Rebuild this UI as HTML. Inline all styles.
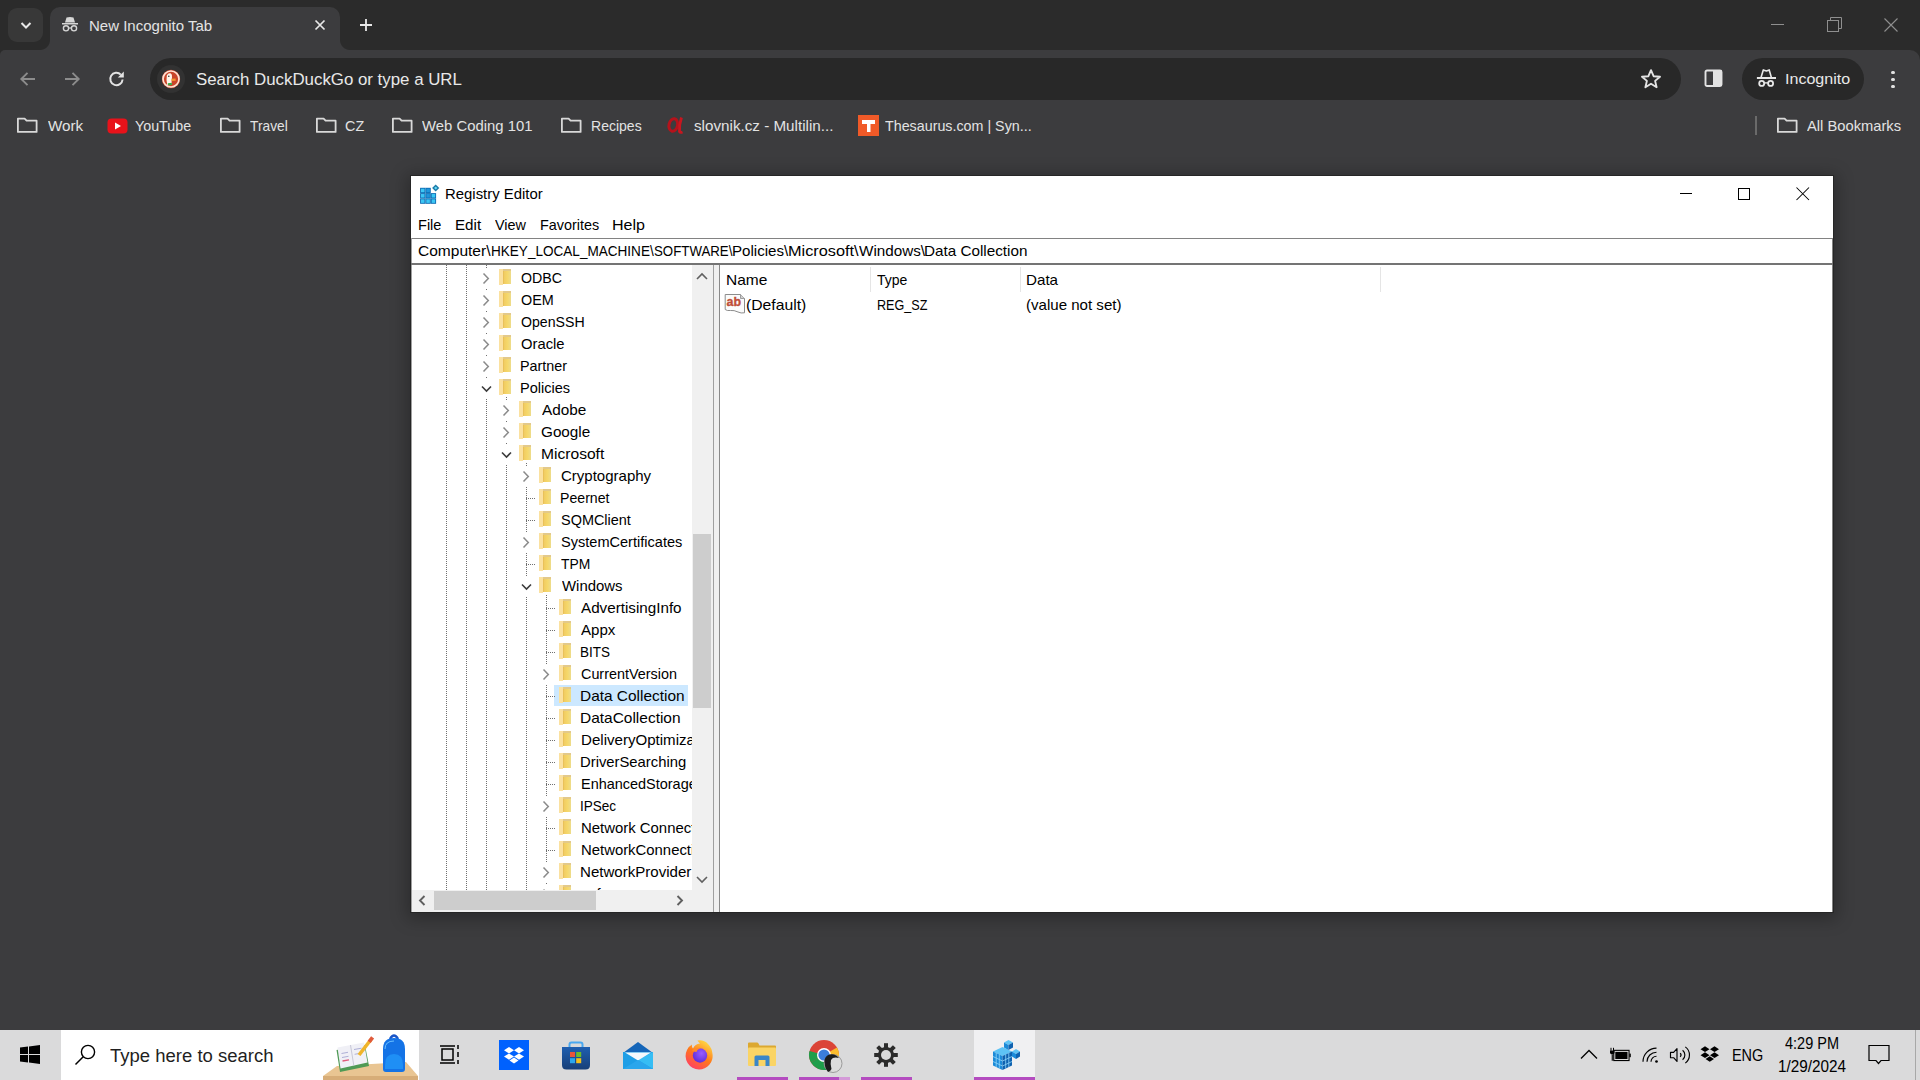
<!DOCTYPE html>
<html><head><meta charset="utf-8"><title>Registry Editor</title>
<style>
html,body{margin:0;padding:0;}
body{width:1920px;height:1080px;overflow:hidden;position:relative;background:#3c3c3e;font-family:"Liberation Sans", sans-serif;}
</style></head><body>
<div style="position:absolute;left:0px;top:0px;width:1920px;height:62px;background:#2b2b2b"></div>
<div style="position:absolute;left:0px;top:50px;width:1920px;height:12px;background:#3c3c3e;border-radius:5px 10px 0 0"></div>
<div style="position:absolute;left:8px;top:8px;width:35px;height:34px;background:#383838;border-radius:9px"></div>
<svg style="position:absolute;left:18px;top:18px;" width="16" height="14" viewBox="0 0 16 14"><path d="M3.5 5 L8 9.5 L12.5 5" fill="none" stroke="#e8e8e8" stroke-width="2"/></svg>
<div style="position:absolute;left:50px;top:7px;width:290px;height:43px;background:#3c3c3e;border-radius:10px 10px 0 0"></div>
<div style="position:absolute;left:40px;top:40px;width:10px;height:10px;background:radial-gradient(circle at 0 0, #2b2b2b 9.5px, #3c3c3e 10.5px)"></div>
<div style="position:absolute;left:340px;top:40px;width:10px;height:10px;background:radial-gradient(circle at 100% 0, #2b2b2b 9.5px, #3c3c3e 10.5px)"></div>
<svg style="position:absolute;left:61px;top:16px;" width="18" height="17" viewBox="0 0 18 17"><path d="M4 6.5 L5.5 1.5 Q9 0.5 12.5 1.5 L14 6.5 Z" fill="#d6d6d6"/><rect x="1" y="7" width="16" height="1.5" fill="#d6d6d6"/><circle cx="5" cy="12.3" r="2.6" fill="none" stroke="#d6d6d6" stroke-width="1.4"/><circle cx="13" cy="12.3" r="2.6" fill="none" stroke="#d6d6d6" stroke-width="1.4"/><path d="M7.6 12 H10.4" stroke="#d6d6d6" stroke-width="1.2"/></svg>
<div style="position:absolute;left:88.77px;top:18.30px;font-size:15px;line-height:15px;color:#e3e3e3;white-space:nowrap;transform:scaleX(1.0003);transform-origin:0 0;">New Incognito Tab</div>
<svg style="position:absolute;left:314px;top:19px;" width="12" height="12" viewBox="0 0 12 12"><path d="M1.5 1.5 L10.5 10.5 M10.5 1.5 L1.5 10.5" stroke="#e8e8e8" stroke-width="1.7"/></svg>
<svg style="position:absolute;left:359px;top:18px;" width="14" height="14" viewBox="0 0 14 14"><path d="M7 1 V13 M1 7 H13" stroke="#e8e8e8" stroke-width="1.8"/></svg>
<svg style="position:absolute;left:1766px;top:14px;" width="20" height="20" viewBox="0 0 20 20"><path d="M5 10.5 H18" stroke="#8f8f8f" stroke-width="1"/></svg>
<svg style="position:absolute;left:1822px;top:14px;" width="22" height="22" viewBox="0 0 22 22"><rect x="5.5" y="6.5" width="11" height="11" fill="none" stroke="#8f8f8f" stroke-width="1"/><path d="M8.5 6.5 V3.5 H19.5 V14.5 H16.5" fill="none" stroke="#8f8f8f" stroke-width="1"/></svg>
<svg style="position:absolute;left:1880px;top:14px;" width="22" height="22" viewBox="0 0 22 22"><path d="M4.5 4.5 L17.5 17.5 M17.5 4.5 L4.5 17.5" stroke="#8f8f8f" stroke-width="1.1"/></svg>
<svg style="position:absolute;left:18px;top:69px;" width="20" height="20" viewBox="0 0 20 20"><path d="M17 10 H3.5 M9.5 3.8 L3.3 10 L9.5 16.2" fill="none" stroke="#8c8c8c" stroke-width="1.9"/></svg>
<svg style="position:absolute;left:62px;top:69px;" width="20" height="20" viewBox="0 0 20 20"><path d="M3 10 H16.5 M10.5 3.8 L16.7 10 L10.5 16.2" fill="none" stroke="#8c8c8c" stroke-width="1.9"/></svg>
<svg style="position:absolute;left:107px;top:69px;" width="20" height="20" viewBox="0 0 20 20"><path d="M15.6 10.5 A6.2 6.2 0 1 1 13.8 5.6" fill="none" stroke="#e3e3e3" stroke-width="2"/><path d="M16.8 2.5 V8.6 H10.8 Z" fill="#e3e3e3"/></svg>
<div style="position:absolute;left:150px;top:58px;width:1531px;height:42px;background:#282828;border-radius:21px"></div>
<div style="position:absolute;left:157px;top:65px;width:28px;height:28px;background:#323232;border-radius:50%"></div>
<svg style="position:absolute;left:161px;top:69px;" width="20" height="20" viewBox="0 0 20 20"><circle cx="10" cy="10" r="9.2" fill="#c9452a"/><circle cx="10" cy="10" r="8" fill="none" stroke="#ffe3d4" stroke-width="1.7"/><path d="M6.3 16 Q5 10.5 5.8 6.5 Q7 3.8 9.5 4.3 Q11.5 5.2 11 8.5 Q10.2 12 10.8 16 Z" fill="#fff6ea"/><circle cx="7.8" cy="7.2" r="0.8" fill="#2d2d2d"/><path d="M10.5 9.8 L14.5 9.6 L14.8 11.8 L10.7 12 Z" fill="#f2962e"/><path d="M6.8 14.2 L10.8 13.8 L11 16 L7 16.3 Z" fill="#3aa845"/></svg>
<div style="position:absolute;left:195.63px;top:71.78px;font-size:16.8px;line-height:16.8px;color:#e8e8e8;white-space:nowrap;transform:scaleX(1.0038);transform-origin:0 0;">Search DuckDuckGo or type a URL</div>
<svg style="position:absolute;left:1640px;top:68px;" width="22" height="22" viewBox="0 0 22 22"><path d="M11 2.2 L13.6 8.2 L20 8.7 L15.1 12.9 L16.6 19.2 L11 15.8 L5.4 19.2 L6.9 12.9 L2 8.7 L8.4 8.2 Z" fill="none" stroke="#e3e3e3" stroke-width="1.9" stroke-linejoin="round"/></svg>
<svg style="position:absolute;left:1704px;top:69px;" width="20" height="20" viewBox="0 0 20 20"><rect x="1.5" y="1.5" width="16" height="15.5" rx="1.5" fill="none" stroke="#e3e3e3" stroke-width="1.9"/><rect x="9" y="1.5" width="8.5" height="15.5" fill="#e3e3e3"/></svg>
<div style="position:absolute;left:1742px;top:58px;width:122px;height:42px;background:#282828;border-radius:21px"></div>
<svg style="position:absolute;left:1756px;top:69px;" width="21" height="19" viewBox="0 0 21 19"><path d="M5.1 8.2 L7.3 0.9 L10.4 2 L13.2 0.9 L15.3 8.2" fill="none" stroke="#e8e8e8" stroke-width="1.6" stroke-linejoin="round"/><rect x="0.9" y="8" width="19.1" height="2" fill="#e8e8e8"/><circle cx="5.7" cy="14.4" r="2.5" fill="none" stroke="#e8e8e8" stroke-width="1.8"/><circle cx="14.6" cy="14.4" r="2.5" fill="none" stroke="#e8e8e8" stroke-width="1.8"/><path d="M8.2 13.9 H12.1" stroke="#e8e8e8" stroke-width="1.4"/></svg>
<div style="position:absolute;left:1784.52px;top:70.88px;font-size:15.5px;line-height:15.5px;color:#e8e8e8;white-space:nowrap;transform:scaleX(1.0357);transform-origin:0 0;">Incognito</div>
<div style="position:absolute;left:1891.2px;top:70.7px;width:3.6px;height:3.6px;border-radius:50%;background:#e3e3e3"></div>
<div style="position:absolute;left:1891.2px;top:77.7px;width:3.6px;height:3.6px;border-radius:50%;background:#e3e3e3"></div>
<div style="position:absolute;left:1891.2px;top:84.7px;width:3.6px;height:3.6px;border-radius:50%;background:#e3e3e3"></div>
<svg style="position:absolute;left:16px;top:116px;" width="24" height="18" viewBox="0 0 24 18"><path d="M1.9 2.6 H8.6 L10.6 4.7 H20.6 V15.9 H1.9 Z" fill="none" stroke="#d9d9d9" stroke-width="1.8" stroke-linejoin="round"/></svg>
<div style="position:absolute;left:47.53px;top:118.30px;font-size:15px;line-height:15px;color:#e3e3e3;white-space:nowrap;transform:scaleX(1.0128);transform-origin:0 0;">Work</div>
<svg style="position:absolute;left:107px;top:118px;" width="21" height="16" viewBox="0 0 21 16"><rect x="0.5" y="0.5" width="20" height="15" rx="4" fill="#e8121a"/><path d="M8 4.5 L14 8 L8 11.5 Z" fill="#fff"/></svg>
<div style="position:absolute;left:134.69px;top:118.30px;font-size:15px;line-height:15px;color:#e3e3e3;white-space:nowrap;transform:scaleX(0.9519);transform-origin:0 0;">YouTube</div>
<svg style="position:absolute;left:219px;top:116px;" width="24" height="18" viewBox="0 0 24 18"><path d="M1.9 2.6 H8.6 L10.6 4.7 H20.6 V15.9 H1.9 Z" fill="none" stroke="#d9d9d9" stroke-width="1.8" stroke-linejoin="round"/></svg>
<div style="position:absolute;left:249.69px;top:118.30px;font-size:15px;line-height:15px;color:#e3e3e3;white-space:nowrap;transform:scaleX(0.9173);transform-origin:0 0;">Travel</div>
<svg style="position:absolute;left:315px;top:116px;" width="24" height="18" viewBox="0 0 24 18"><path d="M1.9 2.6 H8.6 L10.6 4.7 H20.6 V15.9 H1.9 Z" fill="none" stroke="#d9d9d9" stroke-width="1.8" stroke-linejoin="round"/></svg>
<div style="position:absolute;left:345.27px;top:118.30px;font-size:15px;line-height:15px;color:#e3e3e3;white-space:nowrap;transform:scaleX(0.9593);transform-origin:0 0;">CZ</div>
<svg style="position:absolute;left:391px;top:116px;" width="24" height="18" viewBox="0 0 24 18"><path d="M1.9 2.6 H8.6 L10.6 4.7 H20.6 V15.9 H1.9 Z" fill="none" stroke="#d9d9d9" stroke-width="1.8" stroke-linejoin="round"/></svg>
<div style="position:absolute;left:421.93px;top:118.30px;font-size:15px;line-height:15px;color:#e3e3e3;white-space:nowrap;transform:scaleX(0.9915);transform-origin:0 0;">Web Coding 101</div>
<svg style="position:absolute;left:560px;top:116px;" width="24" height="18" viewBox="0 0 24 18"><path d="M1.9 2.6 H8.6 L10.6 4.7 H20.6 V15.9 H1.9 Z" fill="none" stroke="#d9d9d9" stroke-width="1.8" stroke-linejoin="round"/></svg>
<div style="position:absolute;left:590.85px;top:118.30px;font-size:15px;line-height:15px;color:#e3e3e3;white-space:nowrap;transform:scaleX(0.9348);transform-origin:0 0;">Recipes</div>
<svg style="position:absolute;left:666px;top:115px;" width="20" height="20" viewBox="0 0 20 20"><ellipse cx="7.3" cy="10" rx="4.3" ry="6.3" transform="rotate(12 7.3 10)" fill="none" stroke="#b5121b" stroke-width="3"/><path d="M15.5 2.5 Q13 10 13.5 16.5 Q14 18 16.5 17" fill="none" stroke="#c8161f" stroke-width="2.8"/></svg>
<div style="position:absolute;left:693.58px;top:118.30px;font-size:15px;line-height:15px;color:#e3e3e3;white-space:nowrap;transform:scaleX(1.0137);transform-origin:0 0;">slovnik.cz - Multilin...</div>
<svg style="position:absolute;left:858px;top:115px;" width="21" height="21" viewBox="0 0 21 21"><rect width="21" height="21" fill="#f05a28"/><path d="M4 5 H17 V9 H12.5 V17 H9 V9 H4 Z" fill="#fff"/></svg>
<div style="position:absolute;left:884.68px;top:118.30px;font-size:15px;line-height:15px;color:#e3e3e3;white-space:nowrap;transform:scaleX(0.9524);transform-origin:0 0;">Thesaurus.com | Syn...</div>
<div style="position:absolute;left:1755px;top:116px;width:2px;height:19px;background:#6a6a6a"></div>
<svg style="position:absolute;left:1776px;top:116px;" width="24" height="18" viewBox="0 0 24 18"><path d="M1.9 2.6 H8.6 L10.6 4.7 H20.6 V15.9 H1.9 Z" fill="none" stroke="#d9d9d9" stroke-width="1.8" stroke-linejoin="round"/></svg>
<div style="position:absolute;left:1807.47px;top:118.30px;font-size:15px;line-height:15px;color:#e3e3e3;white-space:nowrap;transform:scaleX(0.9812);transform-origin:0 0;">All Bookmarks</div>
<div style="position:absolute;left:411px;top:176px;width:1422px;height:736px;background:#fff;box-shadow:0 0 0 1px #262626,0 3px 16px 4px rgba(0,0,0,0.28)"></div>
<svg style="position:absolute;left:419px;top:183px;" width="22" height="22" viewBox="0 0 22 22"><rect x="1.10" y="4.80" width="5.33" height="5.33" fill="#0b6cb4"/><rect x="2.00" y="5.70" width="3.53" height="3.53" fill="#3cc6f4"/><rect x="6.43" y="4.80" width="5.33" height="5.33" fill="#0b6cb4"/><rect x="7.33" y="5.70" width="3.53" height="3.53" fill="#1f95db"/><rect x="1.10" y="10.13" width="5.33" height="5.33" fill="#0b6cb4"/><rect x="2.00" y="11.03" width="3.53" height="3.53" fill="#3cc6f4"/><rect x="6.43" y="10.13" width="5.33" height="5.33" fill="#0b6cb4"/><rect x="7.33" y="11.03" width="3.53" height="3.53" fill="#1f95db"/><rect x="11.76" y="10.13" width="5.33" height="5.33" fill="#0b6cb4"/><rect x="12.66" y="11.03" width="3.53" height="3.53" fill="#3cc6f4"/><rect x="1.10" y="15.46" width="5.33" height="5.33" fill="#0b6cb4"/><rect x="2.00" y="16.36" width="3.53" height="3.53" fill="#3cc6f4"/><rect x="6.43" y="15.46" width="5.33" height="5.33" fill="#0b6cb4"/><rect x="7.33" y="16.36" width="3.53" height="3.53" fill="#3cc6f4"/><rect x="11.76" y="15.46" width="5.33" height="5.33" fill="#0b6cb4"/><rect x="12.66" y="16.36" width="3.53" height="3.53" fill="#3cc6f4"/><path d="M16.7 1.4 L20.3 5 L16.7 8.6 L13.1 5 Z" fill="#1c7aa8"/><path d="M16.7 3.4 L18.3 5 L16.7 6.6 L15.1 5 Z" fill="#66dcf8"/></svg>
<div style="position:absolute;left:444.53px;top:187.22px;font-size:14.8px;line-height:14.8px;color:#000;white-space:nowrap;transform:scaleX(1.0069);transform-origin:0 0;">Registry Editor</div>
<svg style="position:absolute;left:1676px;top:183px;" width="20" height="20" viewBox="0 0 20 20"><path d="M4 10.5 H16" stroke="#000" stroke-width="1"/></svg>
<svg style="position:absolute;left:1734px;top:184px;" width="20" height="20" viewBox="0 0 20 20"><rect x="4.5" y="4.5" width="11" height="11" fill="none" stroke="#000" stroke-width="1"/></svg>
<svg style="position:absolute;left:1793px;top:184px;" width="20" height="20" viewBox="0 0 20 20"><path d="M3.5 3.5 L16 16 M16 3.5 L3.5 16" stroke="#000" stroke-width="1.05"/></svg>
<div style="position:absolute;left:417.71px;top:218.48px;font-size:14.5px;line-height:14.5px;color:#000;white-space:nowrap;transform:scaleX(1.0032);transform-origin:0 0;">File</div>
<div style="position:absolute;left:454.76px;top:218.48px;font-size:14.5px;line-height:14.5px;color:#000;white-space:nowrap;transform:scaleX(1.0447);transform-origin:0 0;">Edit</div>
<div style="position:absolute;left:495.44px;top:218.48px;font-size:14.5px;line-height:14.5px;color:#000;white-space:nowrap;transform:scaleX(0.9952);transform-origin:0 0;">View</div>
<div style="position:absolute;left:540.22px;top:218.48px;font-size:14.5px;line-height:14.5px;color:#000;white-space:nowrap;transform:scaleX(0.9928);transform-origin:0 0;">Favorites</div>
<div style="position:absolute;left:612.18px;top:218.48px;font-size:14.5px;line-height:14.5px;color:#000;white-space:nowrap;transform:scaleX(1.1062);transform-origin:0 0;">Help</div>
<div style="position:absolute;left:411px;top:238px;width:1422px;height:1px;background:#828282"></div>
<div style="position:absolute;left:411px;top:238px;width:1px;height:674px;background:#a0a0a0"></div>
<div style="position:absolute;left:1832px;top:238px;width:1px;height:674px;background:#828282"></div>
<div style="position:absolute;left:417.51px;top:244.43px;font-size:14.5px;line-height:14.5px;color:#000;white-space:nowrap;transform:scaleX(1.0708);transform-origin:0 0;">Computer\</div>
<div style="position:absolute;left:490.59px;top:244.43px;font-size:14.5px;line-height:14.5px;color:#000;white-space:nowrap;transform:scaleX(0.9348);transform-origin:0 0;">HKEY_LOCAL_MACHINE\</div>
<div style="position:absolute;left:653.60px;top:244.43px;font-size:14.5px;line-height:14.5px;color:#000;white-space:nowrap;transform:scaleX(0.9154);transform-origin:0 0;">SOFTWARE\</div>
<div style="position:absolute;left:732.06px;top:244.43px;font-size:14.5px;line-height:14.5px;color:#000;white-space:nowrap;transform:scaleX(1.0416);transform-origin:0 0;">Policies\</div>
<div style="position:absolute;left:787.66px;top:244.43px;font-size:14.5px;line-height:14.5px;color:#000;white-space:nowrap;transform:scaleX(1.1240);transform-origin:0 0;">Microsoft\</div>
<div style="position:absolute;left:858.93px;top:244.43px;font-size:14.5px;line-height:14.5px;color:#000;white-space:nowrap;transform:scaleX(1.0512);transform-origin:0 0;">Windows\</div>
<div style="position:absolute;left:924.25px;top:244.43px;font-size:14.5px;line-height:14.5px;color:#000;white-space:nowrap;transform:scaleX(1.0520);transform-origin:0 0;">Data Collection</div>
<div style="position:absolute;left:411px;top:263px;width:1422px;height:2px;background:#747474"></div>
<div style="position:absolute;left:412px;top:265px;width:280px;height:625px;overflow:hidden;background:#fff">
<div style="position:absolute;left:34px;top:0px;width:1px;height:625px;background:repeating-linear-gradient(to bottom,#707070 0 1px,transparent 1px 2px)"></div>
<div style="position:absolute;left:54px;top:0px;width:1px;height:625px;background:repeating-linear-gradient(to bottom,#707070 0 1px,transparent 1px 2px)"></div>
<div style="position:absolute;left:74px;top:0px;width:1px;height:625px;background:repeating-linear-gradient(to bottom,#707070 0 1px,transparent 1px 2px)"></div>
<div style="position:absolute;left:94px;top:132px;width:1px;height:493px;background:repeating-linear-gradient(to bottom,#707070 0 1px,transparent 1px 2px)"></div>
<div style="position:absolute;left:114px;top:198px;width:1px;height:427px;background:repeating-linear-gradient(to bottom,#707070 0 1px,transparent 1px 2px)"></div>
<div style="position:absolute;left:134px;top:330px;width:1px;height:295px;background:repeating-linear-gradient(to bottom,#707070 0 1px,transparent 1px 2px)"></div>
<div style="position:absolute;left:142px;top:420px;width:134px;height:21px;background:#cce8ff"></div>
<div style="position:absolute;left:66px;top:3px;width:16px;height:20px;background:#fff"></div>
<svg style="position:absolute;left:69.5px;top:7.5px" width="8" height="11" viewBox="0 0 8 11"><path d="M1.5 0.6 L6.3 5.5 L1.5 10.4" fill="none" stroke="#8a8a8a" stroke-width="1.5"/></svg>
<div style="position:absolute;left:87px;top:4px;width:4px;height:16px;background:#fbe1a0"></div>
<div style="position:absolute;left:91px;top:4px;width:7.5px;height:15px;background:linear-gradient(to bottom,#e3c98a 0,#e3c98a 2px,transparent 2px),linear-gradient(to right,#e2b650 0,#f1cc62 1px,#f5d76a 55%,#eddc8c 100%)"></div>
<div style="position:absolute;left:108.73px;top:5.73px;font-size:14.5px;line-height:14.5px;color:#000;white-space:nowrap;transform:scaleX(0.9790);transform-origin:0 0;">ODBC</div>
<div style="position:absolute;left:66px;top:25px;width:16px;height:20px;background:#fff"></div>
<svg style="position:absolute;left:69.5px;top:29.5px" width="8" height="11" viewBox="0 0 8 11"><path d="M1.5 0.6 L6.3 5.5 L1.5 10.4" fill="none" stroke="#8a8a8a" stroke-width="1.5"/></svg>
<div style="position:absolute;left:87px;top:26px;width:4px;height:16px;background:#fbe1a0"></div>
<div style="position:absolute;left:91px;top:26px;width:7.5px;height:15px;background:linear-gradient(to bottom,#e3c98a 0,#e3c98a 2px,transparent 2px),linear-gradient(to right,#e2b650 0,#f1cc62 1px,#f5d76a 55%,#eddc8c 100%)"></div>
<div style="position:absolute;left:108.72px;top:27.73px;font-size:14.5px;line-height:14.5px;color:#000;white-space:nowrap;transform:scaleX(0.9919);transform-origin:0 0;">OEM</div>
<div style="position:absolute;left:66px;top:47px;width:16px;height:20px;background:#fff"></div>
<svg style="position:absolute;left:69.5px;top:51.5px" width="8" height="11" viewBox="0 0 8 11"><path d="M1.5 0.6 L6.3 5.5 L1.5 10.4" fill="none" stroke="#8a8a8a" stroke-width="1.5"/></svg>
<div style="position:absolute;left:87px;top:48px;width:4px;height:16px;background:#fbe1a0"></div>
<div style="position:absolute;left:91px;top:48px;width:7.5px;height:15px;background:linear-gradient(to bottom,#e3c98a 0,#e3c98a 2px,transparent 2px),linear-gradient(to right,#e2b650 0,#f1cc62 1px,#f5d76a 55%,#eddc8c 100%)"></div>
<div style="position:absolute;left:108.73px;top:49.73px;font-size:14.5px;line-height:14.5px;color:#000;white-space:nowrap;transform:scaleX(0.9745);transform-origin:0 0;">OpenSSH</div>
<div style="position:absolute;left:66px;top:69px;width:16px;height:20px;background:#fff"></div>
<svg style="position:absolute;left:69.5px;top:73.5px" width="8" height="11" viewBox="0 0 8 11"><path d="M1.5 0.6 L6.3 5.5 L1.5 10.4" fill="none" stroke="#8a8a8a" stroke-width="1.5"/></svg>
<div style="position:absolute;left:87px;top:70px;width:4px;height:16px;background:#fbe1a0"></div>
<div style="position:absolute;left:91px;top:70px;width:7.5px;height:15px;background:linear-gradient(to bottom,#e3c98a 0,#e3c98a 2px,transparent 2px),linear-gradient(to right,#e2b650 0,#f1cc62 1px,#f5d76a 55%,#eddc8c 100%)"></div>
<div style="position:absolute;left:108.70px;top:71.73px;font-size:14.5px;line-height:14.5px;color:#000;white-space:nowrap;transform:scaleX(1.0199);transform-origin:0 0;">Oracle</div>
<div style="position:absolute;left:66px;top:91px;width:16px;height:20px;background:#fff"></div>
<svg style="position:absolute;left:69.5px;top:95.5px" width="8" height="11" viewBox="0 0 8 11"><path d="M1.5 0.6 L6.3 5.5 L1.5 10.4" fill="none" stroke="#8a8a8a" stroke-width="1.5"/></svg>
<div style="position:absolute;left:87px;top:92px;width:4px;height:16px;background:#fbe1a0"></div>
<div style="position:absolute;left:91px;top:92px;width:7.5px;height:15px;background:linear-gradient(to bottom,#e3c98a 0,#e3c98a 2px,transparent 2px),linear-gradient(to right,#e2b650 0,#f1cc62 1px,#f5d76a 55%,#eddc8c 100%)"></div>
<div style="position:absolute;left:108.22px;top:93.73px;font-size:14.5px;line-height:14.5px;color:#000;white-space:nowrap;transform:scaleX(0.9887);transform-origin:0 0;">Partner</div>
<div style="position:absolute;left:66px;top:113px;width:16px;height:20px;background:#fff"></div>
<svg style="position:absolute;left:68.5px;top:120px" width="11" height="8" viewBox="0 0 11 8"><path d="M1 1.5 L5.5 6 L10 1.5" fill="none" stroke="#3c3c3c" stroke-width="1.6"/></svg>
<div style="position:absolute;left:87px;top:114px;width:4px;height:16px;background:#fbe1a0"></div>
<div style="position:absolute;left:91px;top:114px;width:7.5px;height:15px;background:linear-gradient(to bottom,#e3c98a 0,#e3c98a 2px,transparent 2px),linear-gradient(to right,#e2b650 0,#f1cc62 1px,#f5d76a 55%,#eddc8c 100%)"></div>
<div style="position:absolute;left:108.21px;top:115.73px;font-size:14.5px;line-height:14.5px;color:#000;white-space:nowrap;transform:scaleX(1.0031);transform-origin:0 0;">Policies</div>
<div style="position:absolute;left:86px;top:135px;width:16px;height:20px;background:#fff"></div>
<svg style="position:absolute;left:89.5px;top:139.5px" width="8" height="11" viewBox="0 0 8 11"><path d="M1.5 0.6 L6.3 5.5 L1.5 10.4" fill="none" stroke="#8a8a8a" stroke-width="1.5"/></svg>
<div style="position:absolute;left:107px;top:136px;width:4px;height:16px;background:#fbe1a0"></div>
<div style="position:absolute;left:111px;top:136px;width:7.5px;height:15px;background:linear-gradient(to bottom,#e3c98a 0,#e3c98a 2px,transparent 2px),linear-gradient(to right,#e2b650 0,#f1cc62 1px,#f5d76a 55%,#eddc8c 100%)"></div>
<div style="position:absolute;left:129.77px;top:137.73px;font-size:14.5px;line-height:14.5px;color:#000;white-space:nowrap;transform:scaleX(1.0568);transform-origin:0 0;">Adobe</div>
<div style="position:absolute;left:86px;top:157px;width:16px;height:20px;background:#fff"></div>
<svg style="position:absolute;left:89.5px;top:161.5px" width="8" height="11" viewBox="0 0 8 11"><path d="M1.5 0.6 L6.3 5.5 L1.5 10.4" fill="none" stroke="#8a8a8a" stroke-width="1.5"/></svg>
<div style="position:absolute;left:107px;top:158px;width:4px;height:16px;background:#fbe1a0"></div>
<div style="position:absolute;left:111px;top:158px;width:7.5px;height:15px;background:linear-gradient(to bottom,#e3c98a 0,#e3c98a 2px,transparent 2px),linear-gradient(to right,#e2b650 0,#f1cc62 1px,#f5d76a 55%,#eddc8c 100%)"></div>
<div style="position:absolute;left:129.03px;top:159.73px;font-size:14.5px;line-height:14.5px;color:#000;white-space:nowrap;transform:scaleX(1.0533);transform-origin:0 0;">Google</div>
<div style="position:absolute;left:86px;top:179px;width:16px;height:20px;background:#fff"></div>
<svg style="position:absolute;left:88.5px;top:186px" width="11" height="8" viewBox="0 0 11 8"><path d="M1 1.5 L5.5 6 L10 1.5" fill="none" stroke="#3c3c3c" stroke-width="1.6"/></svg>
<div style="position:absolute;left:107px;top:180px;width:4px;height:16px;background:#fbe1a0"></div>
<div style="position:absolute;left:111px;top:180px;width:7.5px;height:15px;background:linear-gradient(to bottom,#e3c98a 0,#e3c98a 2px,transparent 2px),linear-gradient(to right,#e2b650 0,#f1cc62 1px,#f5d76a 55%,#eddc8c 100%)"></div>
<div style="position:absolute;left:128.52px;top:181.73px;font-size:14.5px;line-height:14.5px;color:#000;white-space:nowrap;transform:scaleX(1.0762);transform-origin:0 0;">Microsoft</div>
<div style="position:absolute;left:106px;top:201px;width:16px;height:20px;background:#fff"></div>
<svg style="position:absolute;left:109.5px;top:205.5px" width="8" height="11" viewBox="0 0 8 11"><path d="M1.5 0.6 L6.3 5.5 L1.5 10.4" fill="none" stroke="#8a8a8a" stroke-width="1.5"/></svg>
<div style="position:absolute;left:127px;top:202px;width:4px;height:16px;background:#fbe1a0"></div>
<div style="position:absolute;left:131px;top:202px;width:7.5px;height:15px;background:linear-gradient(to bottom,#e3c98a 0,#e3c98a 2px,transparent 2px),linear-gradient(to right,#e2b650 0,#f1cc62 1px,#f5d76a 55%,#eddc8c 100%)"></div>
<div style="position:absolute;left:148.84px;top:203.73px;font-size:14.5px;line-height:14.5px;color:#000;white-space:nowrap;transform:scaleX(1.0350);transform-origin:0 0;">Cryptography</div>
<div style="position:absolute;left:114px;top:233px;width:10px;height:1px;background:repeating-linear-gradient(to right,#707070 0 1px,transparent 1px 2px)"></div>
<div style="position:absolute;left:127px;top:224px;width:4px;height:16px;background:#fbe1a0"></div>
<div style="position:absolute;left:131px;top:224px;width:7.5px;height:15px;background:linear-gradient(to bottom,#e3c98a 0,#e3c98a 2px,transparent 2px),linear-gradient(to right,#e2b650 0,#f1cc62 1px,#f5d76a 55%,#eddc8c 100%)"></div>
<div style="position:absolute;left:148.44px;top:225.73px;font-size:14.5px;line-height:14.5px;color:#000;white-space:nowrap;transform:scaleX(0.9739);transform-origin:0 0;">Peernet</div>
<div style="position:absolute;left:114px;top:255px;width:10px;height:1px;background:repeating-linear-gradient(to right,#707070 0 1px,transparent 1px 2px)"></div>
<div style="position:absolute;left:127px;top:246px;width:4px;height:16px;background:#fbe1a0"></div>
<div style="position:absolute;left:131px;top:246px;width:7.5px;height:15px;background:linear-gradient(to bottom,#e3c98a 0,#e3c98a 2px,transparent 2px),linear-gradient(to right,#e2b650 0,#f1cc62 1px,#f5d76a 55%,#eddc8c 100%)"></div>
<div style="position:absolute;left:148.94px;top:247.73px;font-size:14.5px;line-height:14.5px;color:#000;white-space:nowrap;transform:scaleX(0.9966);transform-origin:0 0;">SQMClient</div>
<div style="position:absolute;left:106px;top:267px;width:16px;height:20px;background:#fff"></div>
<svg style="position:absolute;left:109.5px;top:271.5px" width="8" height="11" viewBox="0 0 8 11"><path d="M1.5 0.6 L6.3 5.5 L1.5 10.4" fill="none" stroke="#8a8a8a" stroke-width="1.5"/></svg>
<div style="position:absolute;left:127px;top:268px;width:4px;height:16px;background:#fbe1a0"></div>
<div style="position:absolute;left:131px;top:268px;width:7.5px;height:15px;background:linear-gradient(to bottom,#e3c98a 0,#e3c98a 2px,transparent 2px),linear-gradient(to right,#e2b650 0,#f1cc62 1px,#f5d76a 55%,#eddc8c 100%)"></div>
<div style="position:absolute;left:148.94px;top:269.73px;font-size:14.5px;line-height:14.5px;color:#000;white-space:nowrap;transform:scaleX(1.0035);transform-origin:0 0;">SystemCertificates</div>
<div style="position:absolute;left:114px;top:299px;width:10px;height:1px;background:repeating-linear-gradient(to right,#707070 0 1px,transparent 1px 2px)"></div>
<div style="position:absolute;left:127px;top:290px;width:4px;height:16px;background:#fbe1a0"></div>
<div style="position:absolute;left:131px;top:290px;width:7.5px;height:15px;background:linear-gradient(to bottom,#e3c98a 0,#e3c98a 2px,transparent 2px),linear-gradient(to right,#e2b650 0,#f1cc62 1px,#f5d76a 55%,#eddc8c 100%)"></div>
<div style="position:absolute;left:149.29px;top:291.73px;font-size:14.5px;line-height:14.5px;color:#000;white-space:nowrap;transform:scaleX(0.9556);transform-origin:0 0;">TPM</div>
<div style="position:absolute;left:106px;top:311px;width:16px;height:20px;background:#fff"></div>
<svg style="position:absolute;left:108.5px;top:318px" width="11" height="8" viewBox="0 0 11 8"><path d="M1 1.5 L5.5 6 L10 1.5" fill="none" stroke="#3c3c3c" stroke-width="1.6"/></svg>
<div style="position:absolute;left:127px;top:312px;width:4px;height:16px;background:#fbe1a0"></div>
<div style="position:absolute;left:131px;top:312px;width:7.5px;height:15px;background:linear-gradient(to bottom,#e3c98a 0,#e3c98a 2px,transparent 2px),linear-gradient(to right,#e2b650 0,#f1cc62 1px,#f5d76a 55%,#eddc8c 100%)"></div>
<div style="position:absolute;left:149.53px;top:313.73px;font-size:14.5px;line-height:14.5px;color:#000;white-space:nowrap;transform:scaleX(1.0286);transform-origin:0 0;">Windows</div>
<div style="position:absolute;left:134px;top:343px;width:10px;height:1px;background:repeating-linear-gradient(to right,#707070 0 1px,transparent 1px 2px)"></div>
<div style="position:absolute;left:147px;top:334px;width:4px;height:16px;background:#fbe1a0"></div>
<div style="position:absolute;left:151px;top:334px;width:7.5px;height:15px;background:linear-gradient(to bottom,#e3c98a 0,#e3c98a 2px,transparent 2px),linear-gradient(to right,#e2b650 0,#f1cc62 1px,#f5d76a 55%,#eddc8c 100%)"></div>
<div style="position:absolute;left:169.37px;top:335.73px;font-size:14.5px;line-height:14.5px;color:#000;white-space:nowrap;transform:scaleX(1.0485);transform-origin:0 0;">AdvertisingInfo</div>
<div style="position:absolute;left:134px;top:365px;width:10px;height:1px;background:repeating-linear-gradient(to right,#707070 0 1px,transparent 1px 2px)"></div>
<div style="position:absolute;left:147px;top:356px;width:4px;height:16px;background:#fbe1a0"></div>
<div style="position:absolute;left:151px;top:356px;width:7.5px;height:15px;background:linear-gradient(to bottom,#e3c98a 0,#e3c98a 2px,transparent 2px),linear-gradient(to right,#e2b650 0,#f1cc62 1px,#f5d76a 55%,#eddc8c 100%)"></div>
<div style="position:absolute;left:169.37px;top:357.73px;font-size:14.5px;line-height:14.5px;color:#000;white-space:nowrap;transform:scaleX(1.0406);transform-origin:0 0;">Appx</div>
<div style="position:absolute;left:134px;top:387px;width:10px;height:1px;background:repeating-linear-gradient(to right,#707070 0 1px,transparent 1px 2px)"></div>
<div style="position:absolute;left:147px;top:378px;width:4px;height:16px;background:#fbe1a0"></div>
<div style="position:absolute;left:151px;top:378px;width:7.5px;height:15px;background:linear-gradient(to bottom,#e3c98a 0,#e3c98a 2px,transparent 2px),linear-gradient(to right,#e2b650 0,#f1cc62 1px,#f5d76a 55%,#eddc8c 100%)"></div>
<div style="position:absolute;left:168.30px;top:379.73px;font-size:14.5px;line-height:14.5px;color:#000;white-space:nowrap;transform:scaleX(0.9284);transform-origin:0 0;">BITS</div>
<div style="position:absolute;left:126px;top:399px;width:16px;height:20px;background:#fff"></div>
<svg style="position:absolute;left:129.5px;top:403.5px" width="8" height="11" viewBox="0 0 8 11"><path d="M1.5 0.6 L6.3 5.5 L1.5 10.4" fill="none" stroke="#8a8a8a" stroke-width="1.5"/></svg>
<div style="position:absolute;left:147px;top:400px;width:4px;height:16px;background:#fbe1a0"></div>
<div style="position:absolute;left:151px;top:400px;width:7.5px;height:15px;background:linear-gradient(to bottom,#e3c98a 0,#e3c98a 2px,transparent 2px),linear-gradient(to right,#e2b650 0,#f1cc62 1px,#f5d76a 55%,#eddc8c 100%)"></div>
<div style="position:absolute;left:168.67px;top:401.73px;font-size:14.5px;line-height:14.5px;color:#000;white-space:nowrap;transform:scaleX(0.9913);transform-origin:0 0;">CurrentVersion</div>
<div style="position:absolute;left:134px;top:431px;width:10px;height:1px;background:repeating-linear-gradient(to right,#707070 0 1px,transparent 1px 2px)"></div>
<div style="position:absolute;left:147px;top:422px;width:4px;height:16px;background:#fbe1a0"></div>
<div style="position:absolute;left:151px;top:422px;width:7.5px;height:15px;background:linear-gradient(to bottom,#e3c98a 0,#e3c98a 2px,transparent 2px),linear-gradient(to right,#e2b650 0,#f1cc62 1px,#f5d76a 55%,#eddc8c 100%)"></div>
<div style="position:absolute;left:168.14px;top:423.73px;font-size:14.5px;line-height:14.5px;color:#000;white-space:nowrap;transform:scaleX(1.0634);transform-origin:0 0;">Data Collection</div>
<div style="position:absolute;left:134px;top:453px;width:10px;height:1px;background:repeating-linear-gradient(to right,#707070 0 1px,transparent 1px 2px)"></div>
<div style="position:absolute;left:147px;top:444px;width:4px;height:16px;background:#fbe1a0"></div>
<div style="position:absolute;left:151px;top:444px;width:7.5px;height:15px;background:linear-gradient(to bottom,#e3c98a 0,#e3c98a 2px,transparent 2px),linear-gradient(to right,#e2b650 0,#f1cc62 1px,#f5d76a 55%,#eddc8c 100%)"></div>
<div style="position:absolute;left:168.13px;top:445.73px;font-size:14.5px;line-height:14.5px;color:#000;white-space:nowrap;transform:scaleX(1.0665);transform-origin:0 0;">DataCollection</div>
<div style="position:absolute;left:134px;top:475px;width:10px;height:1px;background:repeating-linear-gradient(to right,#707070 0 1px,transparent 1px 2px)"></div>
<div style="position:absolute;left:147px;top:466px;width:4px;height:16px;background:#fbe1a0"></div>
<div style="position:absolute;left:151px;top:466px;width:7.5px;height:15px;background:linear-gradient(to bottom,#e3c98a 0,#e3c98a 2px,transparent 2px),linear-gradient(to right,#e2b650 0,#f1cc62 1px,#f5d76a 55%,#eddc8c 100%)"></div>
<div style="position:absolute;left:169.00px;top:467.73px;font-size:14.5px;line-height:14.5px;color:#000;white-space:nowrap;transform:scaleX(1.0400);transform-origin:0 0;">DeliveryOptimization</div>
<div style="position:absolute;left:134px;top:497px;width:10px;height:1px;background:repeating-linear-gradient(to right,#707070 0 1px,transparent 1px 2px)"></div>
<div style="position:absolute;left:147px;top:488px;width:4px;height:16px;background:#fbe1a0"></div>
<div style="position:absolute;left:151px;top:488px;width:7.5px;height:15px;background:linear-gradient(to bottom,#e3c98a 0,#e3c98a 2px,transparent 2px),linear-gradient(to right,#e2b650 0,#f1cc62 1px,#f5d76a 55%,#eddc8c 100%)"></div>
<div style="position:absolute;left:168.19px;top:489.73px;font-size:14.5px;line-height:14.5px;color:#000;white-space:nowrap;transform:scaleX(1.0213);transform-origin:0 0;">DriverSearching</div>
<div style="position:absolute;left:134px;top:519px;width:10px;height:1px;background:repeating-linear-gradient(to right,#707070 0 1px,transparent 1px 2px)"></div>
<div style="position:absolute;left:147px;top:510px;width:4px;height:16px;background:#fbe1a0"></div>
<div style="position:absolute;left:151px;top:510px;width:7.5px;height:15px;background:linear-gradient(to bottom,#e3c98a 0,#e3c98a 2px,transparent 2px),linear-gradient(to right,#e2b650 0,#f1cc62 1px,#f5d76a 55%,#eddc8c 100%)"></div>
<div style="position:absolute;left:169.00px;top:511.73px;font-size:14.5px;line-height:14.5px;color:#000;white-space:nowrap;transform:scaleX(0.9970);transform-origin:0 0;">EnhancedStorageDevices</div>
<div style="position:absolute;left:126px;top:531px;width:16px;height:20px;background:#fff"></div>
<svg style="position:absolute;left:129.5px;top:535.5px" width="8" height="11" viewBox="0 0 8 11"><path d="M1.5 0.6 L6.3 5.5 L1.5 10.4" fill="none" stroke="#8a8a8a" stroke-width="1.5"/></svg>
<div style="position:absolute;left:147px;top:532px;width:4px;height:16px;background:#fbe1a0"></div>
<div style="position:absolute;left:151px;top:532px;width:7.5px;height:15px;background:linear-gradient(to bottom,#e3c98a 0,#e3c98a 2px,transparent 2px),linear-gradient(to right,#e2b650 0,#f1cc62 1px,#f5d76a 55%,#eddc8c 100%)"></div>
<div style="position:absolute;left:168.15px;top:533.73px;font-size:14.5px;line-height:14.5px;color:#000;white-space:nowrap;transform:scaleX(0.9333);transform-origin:0 0;">IPSec</div>
<div style="position:absolute;left:134px;top:563px;width:10px;height:1px;background:repeating-linear-gradient(to right,#707070 0 1px,transparent 1px 2px)"></div>
<div style="position:absolute;left:147px;top:554px;width:4px;height:16px;background:#fbe1a0"></div>
<div style="position:absolute;left:151px;top:554px;width:7.5px;height:15px;background:linear-gradient(to bottom,#e3c98a 0,#e3c98a 2px,transparent 2px),linear-gradient(to right,#e2b650 0,#f1cc62 1px,#f5d76a 55%,#eddc8c 100%)"></div>
<div style="position:absolute;left:169.00px;top:555.73px;font-size:14.5px;line-height:14.5px;color:#000;white-space:nowrap;transform:scaleX(1.0280);transform-origin:0 0;">Network Connections</div>
<div style="position:absolute;left:134px;top:585px;width:10px;height:1px;background:repeating-linear-gradient(to right,#707070 0 1px,transparent 1px 2px)"></div>
<div style="position:absolute;left:147px;top:576px;width:4px;height:16px;background:#fbe1a0"></div>
<div style="position:absolute;left:151px;top:576px;width:7.5px;height:15px;background:linear-gradient(to bottom,#e3c98a 0,#e3c98a 2px,transparent 2px),linear-gradient(to right,#e2b650 0,#f1cc62 1px,#f5d76a 55%,#eddc8c 100%)"></div>
<div style="position:absolute;left:169.00px;top:577.73px;font-size:14.5px;line-height:14.5px;color:#000;white-space:nowrap;transform:scaleX(1.0260);transform-origin:0 0;">NetworkConnectivityStatusIndicator</div>
<div style="position:absolute;left:126px;top:597px;width:16px;height:20px;background:#fff"></div>
<svg style="position:absolute;left:129.5px;top:601.5px" width="8" height="11" viewBox="0 0 8 11"><path d="M1.5 0.6 L6.3 5.5 L1.5 10.4" fill="none" stroke="#8a8a8a" stroke-width="1.5"/></svg>
<div style="position:absolute;left:147px;top:598px;width:4px;height:16px;background:#fbe1a0"></div>
<div style="position:absolute;left:151px;top:598px;width:7.5px;height:15px;background:linear-gradient(to bottom,#e3c98a 0,#e3c98a 2px,transparent 2px),linear-gradient(to right,#e2b650 0,#f1cc62 1px,#f5d76a 55%,#eddc8c 100%)"></div>
<div style="position:absolute;left:168.16px;top:599.73px;font-size:14.5px;line-height:14.5px;color:#000;white-space:nowrap;transform:scaleX(1.0393);transform-origin:0 0;">NetworkProvider</div>
<div style="position:absolute;left:126px;top:619px;width:16px;height:20px;background:#fff"></div>
<svg style="position:absolute;left:129.5px;top:623.5px" width="8" height="11" viewBox="0 0 8 11"><path d="M1.5 0.6 L6.3 5.5 L1.5 10.4" fill="none" stroke="#8a8a8a" stroke-width="1.5"/></svg>
<div style="position:absolute;left:147px;top:620px;width:4px;height:16px;background:#fbe1a0"></div>
<div style="position:absolute;left:151px;top:620px;width:7.5px;height:15px;background:linear-gradient(to bottom,#e3c98a 0,#e3c98a 2px,transparent 2px),linear-gradient(to right,#e2b650 0,#f1cc62 1px,#f5d76a 55%,#eddc8c 100%)"></div>
<div style="position:absolute;left:169.00px;top:621.73px;font-size:14.5px;line-height:14.5px;color:#000;white-space:nowrap;transform:scaleX(1.0200);transform-origin:0 0;">safer</div>
</div>
<div style="position:absolute;left:692px;top:265px;width:21px;height:625px;background:#f0f0f0"></div>
<svg style="position:absolute;left:695px;top:271px;" width="14" height="10" viewBox="0 0 14 10"><path d="M2 8 L7 3 L12 8" fill="none" stroke="#606060" stroke-width="1.6"/></svg>
<svg style="position:absolute;left:695px;top:874.5px;" width="14" height="10" viewBox="0 0 14 10"><path d="M2 2 L7 7 L12 2" fill="none" stroke="#606060" stroke-width="1.6"/></svg>
<div style="position:absolute;left:693px;top:534px;width:18px;height:174px;background:#cdcdcd"></div>
<div style="position:absolute;left:412px;top:890px;width:301px;height:22px;background:#f0f0f0"></div>
<div style="position:absolute;left:434px;top:891px;width:162px;height:19px;background:#cdcdcd"></div>
<svg style="position:absolute;left:417px;top:894px;" width="10" height="14" viewBox="0 0 10 14"><path d="M7.5 2 L3 6.5 L7.5 11" fill="none" stroke="#606060" stroke-width="1.9"/></svg>
<svg style="position:absolute;left:675px;top:894px;" width="10" height="14" viewBox="0 0 10 14"><path d="M2.5 2 L7 6.5 L2.5 11" fill="none" stroke="#606060" stroke-width="1.9"/></svg>
<div style="position:absolute;left:713px;top:265px;width:1px;height:647px;background:#a0a0a0"></div>
<div style="position:absolute;left:714px;top:265px;width:5px;height:647px;background:#f0f0f0"></div>
<div style="position:absolute;left:719px;top:265px;width:1px;height:647px;background:#8a8a8a"></div>
<div style="position:absolute;left:726.03px;top:272.73px;font-size:14.5px;line-height:14.5px;color:#000;white-space:nowrap;transform:scaleX(1.0694);transform-origin:0 0;">Name</div>
<div style="position:absolute;left:877.29px;top:272.73px;font-size:14.5px;line-height:14.5px;color:#000;white-space:nowrap;transform:scaleX(0.9659);transform-origin:0 0;">Type</div>
<div style="position:absolute;left:1026.36px;top:272.73px;font-size:14.5px;line-height:14.5px;color:#000;white-space:nowrap;transform:scaleX(1.0462);transform-origin:0 0;">Data</div>
<div style="position:absolute;left:870px;top:267px;width:1px;height:25px;background:#e5e5e5"></div>
<div style="position:absolute;left:1020px;top:267px;width:1px;height:25px;background:#e5e5e5"></div>
<div style="position:absolute;left:1380px;top:267px;width:1px;height:25px;background:#e5e5e5"></div>
<svg style="position:absolute;left:724px;top:293px;" width="22" height="22" viewBox="0 0 22 22"><path d="M1.2 1.5 H16.5 L20.5 5.5 V19.8 Q17 20.5 14 19 Q10 17 6.5 17.5 Q3 18 1.2 16.5 Z" fill="#fbfbfb" stroke="#8c8c8c" stroke-width="1"/><path d="M16.5 1.5 V5.5 H20.5" fill="#d0d0d0" stroke="#8c8c8c" stroke-width="0.8"/><text x="2.6" y="13.2" font-family="Liberation Sans" font-weight="bold" font-size="12.5" fill="#bf4e38" stroke="#bf4e38" stroke-width="0.35" textLength="14.5" lengthAdjust="spacingAndGlyphs">ab</text></svg>
<div style="position:absolute;left:746.43px;top:297.73px;font-size:14.5px;line-height:14.5px;color:#000;white-space:nowrap;transform:scaleX(1.0836);transform-origin:0 0;">(Default)</div>
<div style="position:absolute;left:876.57px;top:297.73px;font-size:14.5px;line-height:14.5px;color:#000;white-space:nowrap;transform:scaleX(0.8692);transform-origin:0 0;">REG_SZ</div>
<div style="position:absolute;left:1026.47px;top:297.73px;font-size:14.5px;line-height:14.5px;color:#000;white-space:nowrap;transform:scaleX(1.0391);transform-origin:0 0;">(value not set)</div>
<div style="position:absolute;left:0px;top:1030px;width:1920px;height:50px;background:#dadadb"></div>
<svg style="position:absolute;left:18px;top:1043px;" width="24" height="24" viewBox="0 0 24 24"><path d="M2 4.6 L10 3.5 V11 H2 Z M11 3.4 L22 2 V11 H11 Z M2 12 H10 V19.5 L2 18.4 Z M11 12 H22 V21 L11 19.6 Z" fill="#000"/></svg>
<div style="position:absolute;left:61px;top:1030px;width:358px;height:50px;background:#fff"></div>
<svg style="position:absolute;left:72px;top:1043px;" width="26" height="26" viewBox="0 0 26 26"><circle cx="16" cy="9" r="6.6" fill="none" stroke="#000" stroke-width="1.4"/><path d="M11.2 13.8 L3.5 21.5" stroke="#000" stroke-width="1.5"/></svg>
<div style="position:absolute;left:109.88px;top:1046.89px;font-size:18.8px;line-height:18.8px;color:#1f1f1f;white-space:nowrap;transform:scaleX(0.9852);transform-origin:0 0;">Type here to search</div>
<svg style="position:absolute;left:320px;top:1058px;" width="100" height="22" viewBox="0 0 100 22"><path d="M3 22 L3 18 L17 8 L86 4 L98 18 L98 22 Z" fill="#e9c592"/><rect x="3" y="18" width="95" height="4" fill="#d7ad78"/></svg>
<svg style="position:absolute;left:334px;top:1036px;" width="42" height="40" viewBox="0 0 42 40"><path d="M2.5 14 L31 9 L35 30 L6 36 Z" fill="#4f9a55"/><path d="M3.5 11.5 L30 6.5 L33.5 26.5 L6.5 32.5 Z" fill="#f0f0f6"/><path d="M16.5 9 L19.8 29.5" stroke="#c8c8d8" stroke-width="1"/><path d="M7.5 17.5 L14 16.3 M8 21.5 L14.5 20.3 M20 13.5 L27.5 12.2 M20.6 18.3 L28 17" stroke="#aeb0d6" stroke-width="1"/><path d="M8.5 25 L15 23.8" stroke="#e05a7a" stroke-width="1.3"/><path d="M25 19 L37 3.5" stroke="#f0b429" stroke-width="3.6"/><path d="M35.2 5.8 L38.6 1.4" stroke="#e05a3a" stroke-width="3.8"/></svg>
<svg style="position:absolute;left:380px;top:1032px;" width="28" height="42" viewBox="0 0 28 42"><path d="M10 7 Q14 0 18 7" fill="none" stroke="#1a56c8" stroke-width="2.5"/><path d="M3 17 Q3 6 14 6 Q25 6 25 17 V37 Q25 40 22 40 H6 Q3 40 3 37 Z" fill="#1473e6"/><path d="M5 33 Q5 22 14 22 Q23 22 23 33 V37 H5 Z" fill="#1f8ff5"/><path d="M5 17 Q5 9 14 9" fill="none" stroke="#6cc0ff" stroke-width="1"/></svg>
<svg style="position:absolute;left:437px;top:1043px;" width="26" height="24" viewBox="0 0 26 24"><rect x="5" y="6" width="11" height="11" fill="none" stroke="#000" stroke-width="1.5"/><path d="M3 3 H18 M3 20 H18 M21 2 V6 M21 9 V14 M21 17 V21" stroke="#000" stroke-width="1.5"/></svg>
<div style="position:absolute;left:499px;top:1040px;width:30px;height:30px;background:#0061fe"></div>
<svg style="position:absolute;left:499px;top:1040px;" width="30" height="30" viewBox="0 0 30 30"><g fill="#fff"><path d="M10 7 L15 10.2 L10 13.4 L5 10.2 Z"/><path d="M20 7 L25 10.2 L20 13.4 L15 10.2 Z"/><path d="M10 13.4 L15 16.6 L10 19.8 L5 16.6 Z"/><path d="M20 13.4 L25 16.6 L20 19.8 L15 16.6 Z"/><path d="M15 17.6 L19.5 20.5 L15 23.4 L10.5 20.5 Z"/></g></svg>
<svg style="position:absolute;left:560px;top:1039px;" width="32" height="32" viewBox="0 0 32 32"><defs><linearGradient id="stg" x1="0" y1="0" x2="0" y2="1"><stop offset="0" stop-color="#1f5fb0"/><stop offset="1" stop-color="#173f78"/></linearGradient></defs><path d="M9.5 8 V5.5 Q9.5 3.5 11.5 3.5 H20.5 Q22.5 3.5 22.5 5.5 V8" fill="none" stroke="#4aa8f0" stroke-width="2"/><path d="M2 8 H30 V26 Q30 30.5 25.5 30.5 H6.5 Q2 30.5 2 26 Z" fill="url(#stg)"/><rect x="10" y="13" width="5" height="5" fill="#e8543a"/><rect x="16.2" y="13" width="5" height="5" fill="#6dbb2a"/><rect x="10" y="19.2" width="5" height="5" fill="#2aa7ee"/><rect x="16.2" y="19.2" width="5" height="5" fill="#f3c01c"/></svg>
<svg style="position:absolute;left:622px;top:1039px;" width="32" height="32" viewBox="0 0 32 32"><path d="M1 14 L16 3 L31 14 Z" fill="#1565b8"/><rect x="1" y="13" width="30" height="17" fill="#1e9ee6"/><path d="M16 21 L31 30 V13 Z" fill="#36bdf4"/><path d="M3 13.5 H29 L16 21.5 Z" fill="#f4f8fc"/><path d="M1 30 L16 21 L31 30 Z" fill="#2aa6ec"/></svg>
<svg style="position:absolute;left:684px;top:1039px;" width="32" height="32" viewBox="0 0 32 32"><defs><linearGradient id="ffg" x1="0.2" y1="1" x2="0.8" y2="0"><stop offset="0" stop-color="#ff3a6a"/><stop offset="0.5" stop-color="#ff7a1a"/><stop offset="1" stop-color="#ffe14a"/></linearGradient><radialGradient id="ffp" cx="0.6" cy="0.35" r="0.7"><stop offset="0" stop-color="#9a5cff"/><stop offset="1" stop-color="#5b2bd8"/></radialGradient></defs><path d="M15 30.5 A13.5 13.5 0 0 1 3 11 Q5 7 8 5.5 Q7.5 8 9 9.5 Q11 5 16 4.5 Q14 2.5 13.5 1.5 Q20 0.5 24 5 Q28 9 28.5 15 A13.5 13.5 0 0 1 15 30.5 Z" fill="url(#ffg)"/><circle cx="16" cy="16.5" r="7.2" fill="url(#ffp)"/><path d="M8 12 Q11 8 17 9 Q13 10.5 12.5 13 Q9.5 12.5 8 12 Z" fill="#ff8a2a"/></svg>
<svg style="position:absolute;left:746px;top:1041px;" width="32" height="28" viewBox="0 0 32 28"><path d="M2 2.5 Q2 1.5 3 1.5 H11 Q12 1.5 12.5 2.5 L13.5 4.5 H29 Q30 4.5 30 5.5 V8 H2 Z" fill="#dca830"/><rect x="2" y="6.5" width="28" height="18.5" rx="1" fill="#fad465"/><path d="M8.5 25 V16 Q8.5 14.5 10 14.5 H22 Q23.5 14.5 23.5 16 V25 H19.5 V19 H12.5 V25 Z" fill="#3a86c8"/></svg>
<svg style="position:absolute;left:808px;top:1039px;" width="36" height="36" viewBox="0 0 36 36"><circle cx="16" cy="16" r="15" fill="#db4437"/><path d="M16 16 L3 23.5 A15 15 0 0 0 20 30.5 Z" fill="#1e9e4a"/><path d="M16 16 L3 23.5 A15 15 0 0 1 1.5 12 Z" fill="#1e9e4a"/><path d="M16 16 L29 8.5 A15 15 0 0 1 20 30.5 Z" fill="#fbbc2c"/><circle cx="16" cy="16" r="7" fill="#fff"/><circle cx="16" cy="16" r="5.6" fill="#3b7ddb"/><circle cx="25" cy="24.5" r="9" fill="#dcdcdc" stroke="#8a8a8a" stroke-width="0.8"/><path d="M16.5 21 Q18 14.5 26 15.5 Q29 16 31 19 Q25 17.5 23 21 Q22 25 23.5 30 Q22 33 20 33 Q16 28 16.5 21 Z" fill="#1c1c1c"/></svg>
<svg style="position:absolute;left:872px;top:1041px;" width="28" height="28" viewBox="0 0 28 28"><g transform="translate(14 14)"><g fill="#2b2b2b"><rect x="-2" y="-11.8" width="4" height="5" transform="rotate(0)"/><rect x="-2" y="-11.8" width="4" height="5" transform="rotate(45)"/><rect x="-2" y="-11.8" width="4" height="5" transform="rotate(90)"/><rect x="-2" y="-11.8" width="4" height="5" transform="rotate(135)"/><rect x="-2" y="-11.8" width="4" height="5" transform="rotate(180)"/><rect x="-2" y="-11.8" width="4" height="5" transform="rotate(225)"/><rect x="-2" y="-11.8" width="4" height="5" transform="rotate(270)"/><rect x="-2" y="-11.8" width="4" height="5" transform="rotate(315)"/></g><circle r="8" fill="#2b2b2b"/><circle r="5" fill="#dadadb"/></g></svg>
<div style="position:absolute;left:974px;top:1030px;width:61px;height:50px;background:#f0f0f2"></div>
<svg style="position:absolute;left:990px;top:1039px;" width="32" height="32" viewBox="0 0 32 32"><path d="M3 12.5 L12.5 8 L22 12.5 L12.5 17 Z" fill="#5ec3f5"/><path d="M3 12.5 L12.5 17 V31 L3 26.5 Z" fill="#1b8ad8"/><path d="M12.5 17 L22 12.5 V26.5 L12.5 31 Z" fill="#0f62b0"/><path d="M3 17.5 L12.5 22 L22 17.5 M3 22.5 L12.5 27 L22 22.5 M6.2 14 V28 M9.3 15.5 V29.5 M15.7 15.5 V29.5 M18.8 14 V28" stroke="#8fd6fa" stroke-width="0.8" fill="none"/><path d="M14 3.5 L18.5 1 L23 3.5 L18.5 6 Z" fill="#5ec3f5"/><path d="M14 3.5 L18.5 6 V11 L14 8.5 Z" fill="#1b8ad8"/><path d="M18.5 6 L23 3.5 V8.5 L18.5 11 Z" fill="#0f62b0"/><path d="M22 12.5 L26.0 10 L30 12.5 L26.0 15 Z" fill="#5ec3f5"/><path d="M22 12.5 L26.0 15 V20 L22 17.5 Z" fill="#1b8ad8"/><path d="M26.0 15 L30 12.5 V17.5 L26.0 20 Z" fill="#0f62b0"/></svg>
<div style="position:absolute;left:737px;top:1077px;width:51px;height:3px;background:#b44cc0"></div>
<div style="position:absolute;left:799px;top:1077px;width:51px;height:3px;background:#b44cc0"></div>
<div style="position:absolute;left:861px;top:1077px;width:51px;height:3px;background:#b44cc0"></div>
<div style="position:absolute;left:974px;top:1077px;width:61px;height:3px;background:#b44cc0"></div>
<div style="position:absolute;left:839px;top:1077px;width:11px;height:3px;background:#d49ad8"></div>
<svg style="position:absolute;left:1578px;top:1046px;" width="22" height="16" viewBox="0 0 22 16"><path d="M3 12.5 L11 4.5 L19 12.5" fill="none" stroke="#000" stroke-width="1.3"/></svg>
<svg style="position:absolute;left:1607px;top:1046px;" width="26" height="17" viewBox="0 0 26 17"><path d="M4 1.8 V4.6 M6.5 1.8 V4.6" stroke="#000" stroke-width="1"/><path d="M3 4.5 H7.5 V6.5 Q7.5 8.6 5.25 8.6 Q3 8.6 3 6.5 Z" fill="#000"/><path d="M5.25 8.5 V14.8" stroke="#000" stroke-width="1.1"/><rect x="6.75" y="4.35" width="15.3" height="10.2" fill="none" stroke="#000" stroke-width="1.1"/><rect x="8.3" y="5.9" width="12.2" height="7.1" fill="#000"/><rect x="22.3" y="7.6" width="1.5" height="3.6" fill="#000"/></svg>
<svg style="position:absolute;left:1641px;top:1045px;" width="20" height="20" viewBox="0 0 20 20"><g fill="none" stroke="#000" stroke-width="1.15"><path d="M2 16.7 A13.5 13.5 0 0 1 15.5 3.2"/><path d="M6 16.7 A9.5 9.5 0 0 1 15.5 7.2"/><path d="M10 16.7 A5.5 5.5 0 0 1 15.5 11.2"/></g><circle cx="15.5" cy="16.5" r="1.35" fill="#000"/></svg>
<svg style="position:absolute;left:1668px;top:1045px;" width="24" height="20" viewBox="0 0 24 20"><path d="M2.5 7.3 H5.6 L9 3.6 V16.4 L5.6 12.7 H2.5 Z" fill="none" stroke="#000" stroke-width="1.15" stroke-linejoin="round"/><g fill="none" stroke="#000" stroke-width="1.15"><path d="M12.2 8.2 A2.6 2.6 0 0 1 12.2 11.8"/><path d="M14.6 5.3 A6 6 0 0 1 14.6 14.7"/><path d="M17.3 1.9 A10 10 0 0 1 17.3 18.1"/></g></svg>
<svg style="position:absolute;left:1699px;top:1045px;" width="22" height="18" viewBox="0 0 22 18"><g fill="#000"><path d="M6 1.3 L10.5 4.2 L6 7.1 L1.5 4.2 Z"/><path d="M15.5 1.3 L20 4.2 L15.5 7.1 L11 4.2 Z"/><path d="M6 7.3 L10.5 10.2 L6 13.1 L1.5 10.2 Z"/><path d="M15.5 7.3 L20 10.2 L15.5 13.1 L11 10.2 Z"/><path d="M10.75 11.2 L15 14 L10.75 16.8 L6.5 14 Z"/></g></svg>
<div style="position:absolute;left:1731.82px;top:1047.63px;font-size:15.8px;line-height:15.8px;color:#000;white-space:nowrap;transform:scaleX(0.9130);transform-origin:0 0;">ENG</div>
<div style="position:absolute;left:1785.17px;top:1036.19px;font-size:15.6px;line-height:15.6px;color:#000;white-space:nowrap;transform:scaleX(0.9299);transform-origin:0 0;">4:29 PM</div>
<div style="position:absolute;left:1778.44px;top:1059.09px;font-size:15.6px;line-height:15.6px;color:#000;white-space:nowrap;transform:scaleX(0.9800);transform-origin:0 0;">1/29/2024</div>
<svg style="position:absolute;left:1866px;top:1043px;" width="26" height="24" viewBox="0 0 26 24"><path d="M3 2.5 H23 V17.5 H15 L12.5 20.5 L10 17.5 H3 Z" fill="none" stroke="#000" stroke-width="1.2"/></svg>
<div style="position:absolute;left:1915px;top:1030px;width:1px;height:50px;background:#a8a8a8"></div>
</body></html>
